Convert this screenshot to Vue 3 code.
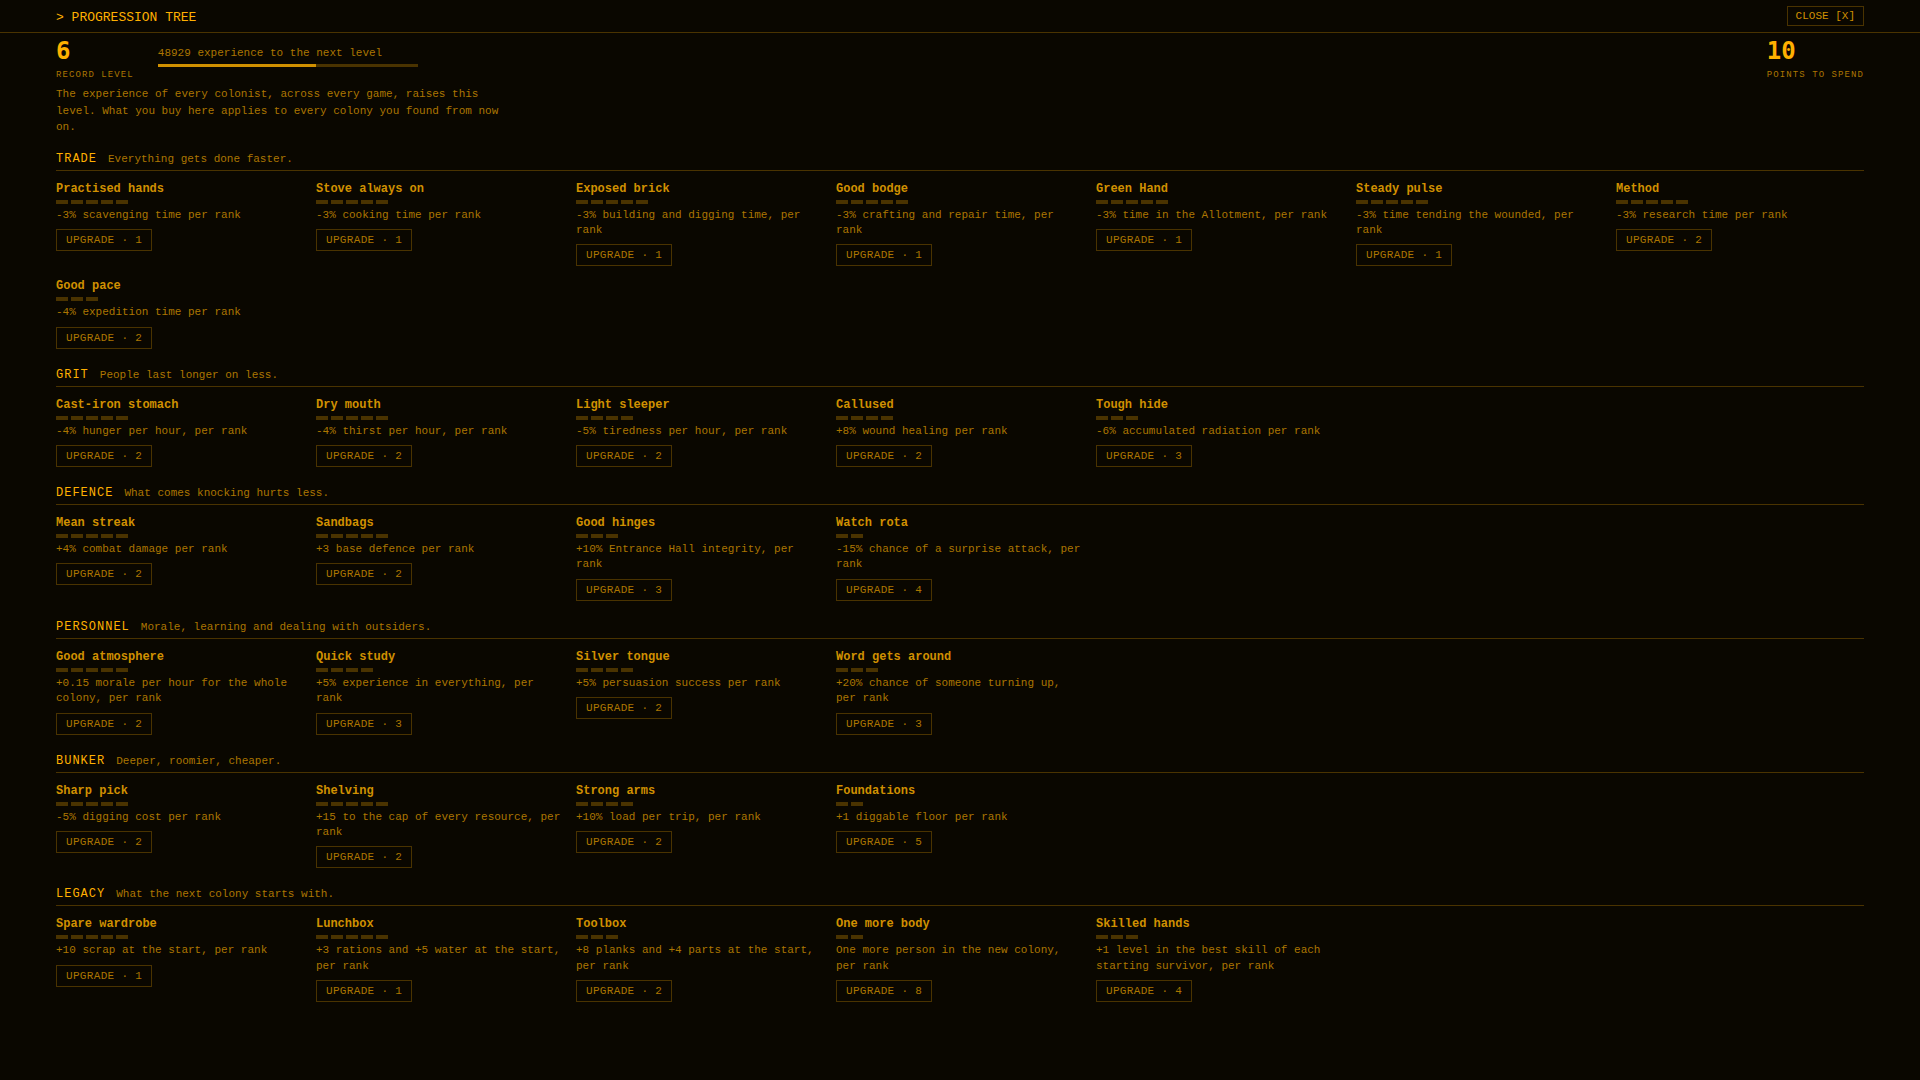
<script setup>
const skill = (name, ranks, effect, cost) => ({ name, ranks, effect, cost })

const branches = [
  {
    title: 'TRADE',
    blurb: 'Everything gets done faster.',
    skills: [
      skill('Practised hands', 5, '-3% scavenging time per rank', 1),
      skill('Stove always on', 5, '-3% cooking time per rank', 1),
      skill('Exposed brick', 5, '-3% building and digging time, per rank', 1),
      skill('Good bodge', 5, '-3% crafting and repair time, per rank', 1),
      skill('Green Hand', 5, '-3% time in the Allotment, per rank', 1),
      skill('Steady pulse', 5, '-3% time tending the wounded, per rank', 1),
      skill('Method', 5, '-3% research time per rank', 2),
      skill('Good pace', 3, '-4% expedition time per rank', 2),
    ],
  },
  {
    title: 'GRIT',
    blurb: 'People last longer on less.',
    skills: [
      skill('Cast-iron stomach', 5, '-4% hunger per hour, per rank', 2),
      skill('Dry mouth', 5, '-4% thirst per hour, per rank', 2),
      skill('Light sleeper', 4, '-5% tiredness per hour, per rank', 2),
      skill('Callused', 4, '+8% wound healing per rank', 2),
      skill('Tough hide', 3, '-6% accumulated radiation per rank', 3),
    ],
  },
  {
    title: 'DEFENCE',
    blurb: 'What comes knocking hurts less.',
    skills: [
      skill('Mean streak', 5, '+4% combat damage per rank', 2),
      skill('Sandbags', 5, '+3 base defence per rank', 2),
      skill('Good hinges', 3, '+10% Entrance Hall integrity, per rank', 3),
      skill('Watch rota', 2, '-15% chance of a surprise attack, per rank', 4),
    ],
  },
  {
    title: 'PERSONNEL',
    blurb: 'Morale, learning and dealing with outsiders.',
    skills: [
      skill('Good atmosphere', 5, '+0.15 morale per hour for the whole colony, per rank', 2),
      skill('Quick study', 4, '+5% experience in everything, per rank', 3),
      skill('Silver tongue', 4, '+5% persuasion success per rank', 2),
      skill('Word gets around', 3, '+20% chance of someone turning up, per rank', 3),
    ],
  },
  {
    title: 'BUNKER',
    blurb: 'Deeper, roomier, cheaper.',
    skills: [
      skill('Sharp pick', 5, '-5% digging cost per rank', 2),
      skill('Shelving', 5, '+15 to the cap of every resource, per rank', 2),
      skill('Strong arms', 4, '+10% load per trip, per rank', 2),
      skill('Foundations', 2, '+1 diggable floor per rank', 5),
    ],
  },
  {
    title: 'LEGACY',
    blurb: 'What the next colony starts with.',
    skills: [
      skill('Spare wardrobe', 5, '+10 scrap at the start, per rank', 1),
      skill('Lunchbox', 5, '+3 rations and +5 water at the start, per rank', 1),
      skill('Toolbox', 3, '+8 planks and +4 parts at the start, per rank', 2),
      skill('One more body', 2, 'One more person in the new colony, per rank', 8),
      skill('Skilled hands', 3, '+1 level in the best skill of each starting survivor, per rank', 4),
    ],
  },
]

const progress = 61
</script>

<template>
  <div class="screen">
    <header class="topbar">
      <h1>&gt; PROGRESSION TREE</h1>
      <button type="button" class="close">CLOSE [X]</button>
    </header>

    <main>
      <div class="summary">
        <div class="stat">
          <span class="figure">6</span>
          <span class="label">RECORD LEVEL</span>
        </div>
        <div class="experience">
          <span>48929 experience to the next level</span>
          <div class="track"><div class="fill" :style="{ width: progress + '%' }"></div></div>
        </div>
        <div class="stat points">
          <span class="figure">10</span>
          <span class="label">POINTS TO SPEND</span>
        </div>
      </div>

      <p class="intro">
        The experience of every colonist, across every game, raises this level. What you buy here
        applies to every colony you found from now on.
      </p>

      <section v-for="branch in branches" :key="branch.title">
        <div class="heading">
          <h2>{{ branch.title }}</h2>
          <span>{{ branch.blurb }}</span>
        </div>
        <div class="grid">
          <article v-for="item in branch.skills" :key="item.name">
            <h3>{{ item.name }}</h3>
            <div class="pips"><i v-for="n in item.ranks" :key="n"></i></div>
            <p>{{ item.effect }}</p>
            <button type="button" class="upgrade">UPGRADE · {{ item.cost }}</button>
          </article>
        </div>
      </section>
    </main>
  </div>
</template>

<style>
body {
  margin: 0;
  background: #0a0700;
}
</style>

<style scoped>
.screen {
  --bright: #ffb000;
  --mid: #d09000;
  --dim: #ac7600;
  --line: #4a3300;
  min-height: 100vh;
  background: #0a0700;
  color: var(--dim);
  font-family: "Liberation Mono", monospace;
  font-size: 11px;
}

h1,
h2,
h3,
p {
  margin: 0;
}

.topbar {
  display: flex;
  align-items: center;
  justify-content: space-between;
  height: 32px;
  padding: 0 56px;
  border-bottom: 1px solid var(--line);
}

h1 {
  padding-top: 3px;
  color: var(--bright);
  font-size: 13px;
  font-weight: 400;
  line-height: 16px;
}

button {
  background: transparent;
  border: 1px solid var(--line);
  font-family: inherit;
  font-size: 11px;
  cursor: pointer;
}

.close {
  height: 20px;
  padding: 0 8px;
  color: var(--mid);
}

main {
  padding: 4px 56px 56px;
}

.summary {
  display: flex;
  align-items: flex-start;
  gap: 24px;
}

.stat {
  display: flex;
  flex-direction: column;
  gap: 4px;
}

.figure {
  color: var(--bright);
  font-family: "DejaVu Sans Mono", monospace;
  font-size: 24px;
  font-weight: 700;
  line-height: 28px;
}

.label {
  font-size: 9px;
  line-height: 12px;
  letter-spacing: 0.12em;
}

.points {
  margin-left: auto;
}

.experience {
  width: 260px;
  padding-top: 8px;
  line-height: 16px;
}

.track {
  height: 3px;
  margin-top: 3px;
  background: var(--line);
}

.fill {
  height: 100%;
  background: var(--mid);
}

.intro {
  max-width: 460px;
  margin: 5px 0 15px;
  line-height: 1.5;
}

section {
  margin-bottom: 18px;
}

.heading {
  display: flex;
  align-items: baseline;
  gap: 11px;
  padding-bottom: 3px;
  border-bottom: 1px solid var(--line);
  line-height: 16px;
}

h2 {
  color: var(--bright);
  font-size: 12px;
  font-weight: 400;
  letter-spacing: 1px;
}

.grid {
  display: grid;
  grid-template-columns: repeat(auto-fill, minmax(230px, 1fr));
  gap: 12px;
  padding-top: 10px;
}

article {
  display: flex;
  flex-direction: column;
  align-items: flex-start;
}

h3 {
  color: var(--mid);
  font-size: 12px;
  line-height: 17px;
}

.pips {
  display: flex;
  gap: 3px;
  margin: 2px 0 4px;
}

.pips i {
  width: 12px;
  height: 4px;
  background: var(--line);
}

article p {
  line-height: 1.4;
}

.upgrade {
  height: 22px;
  margin-top: 6px;
  padding: 0 9px;
  color: var(--dim);
  letter-spacing: 0.03em;
}
</style>
